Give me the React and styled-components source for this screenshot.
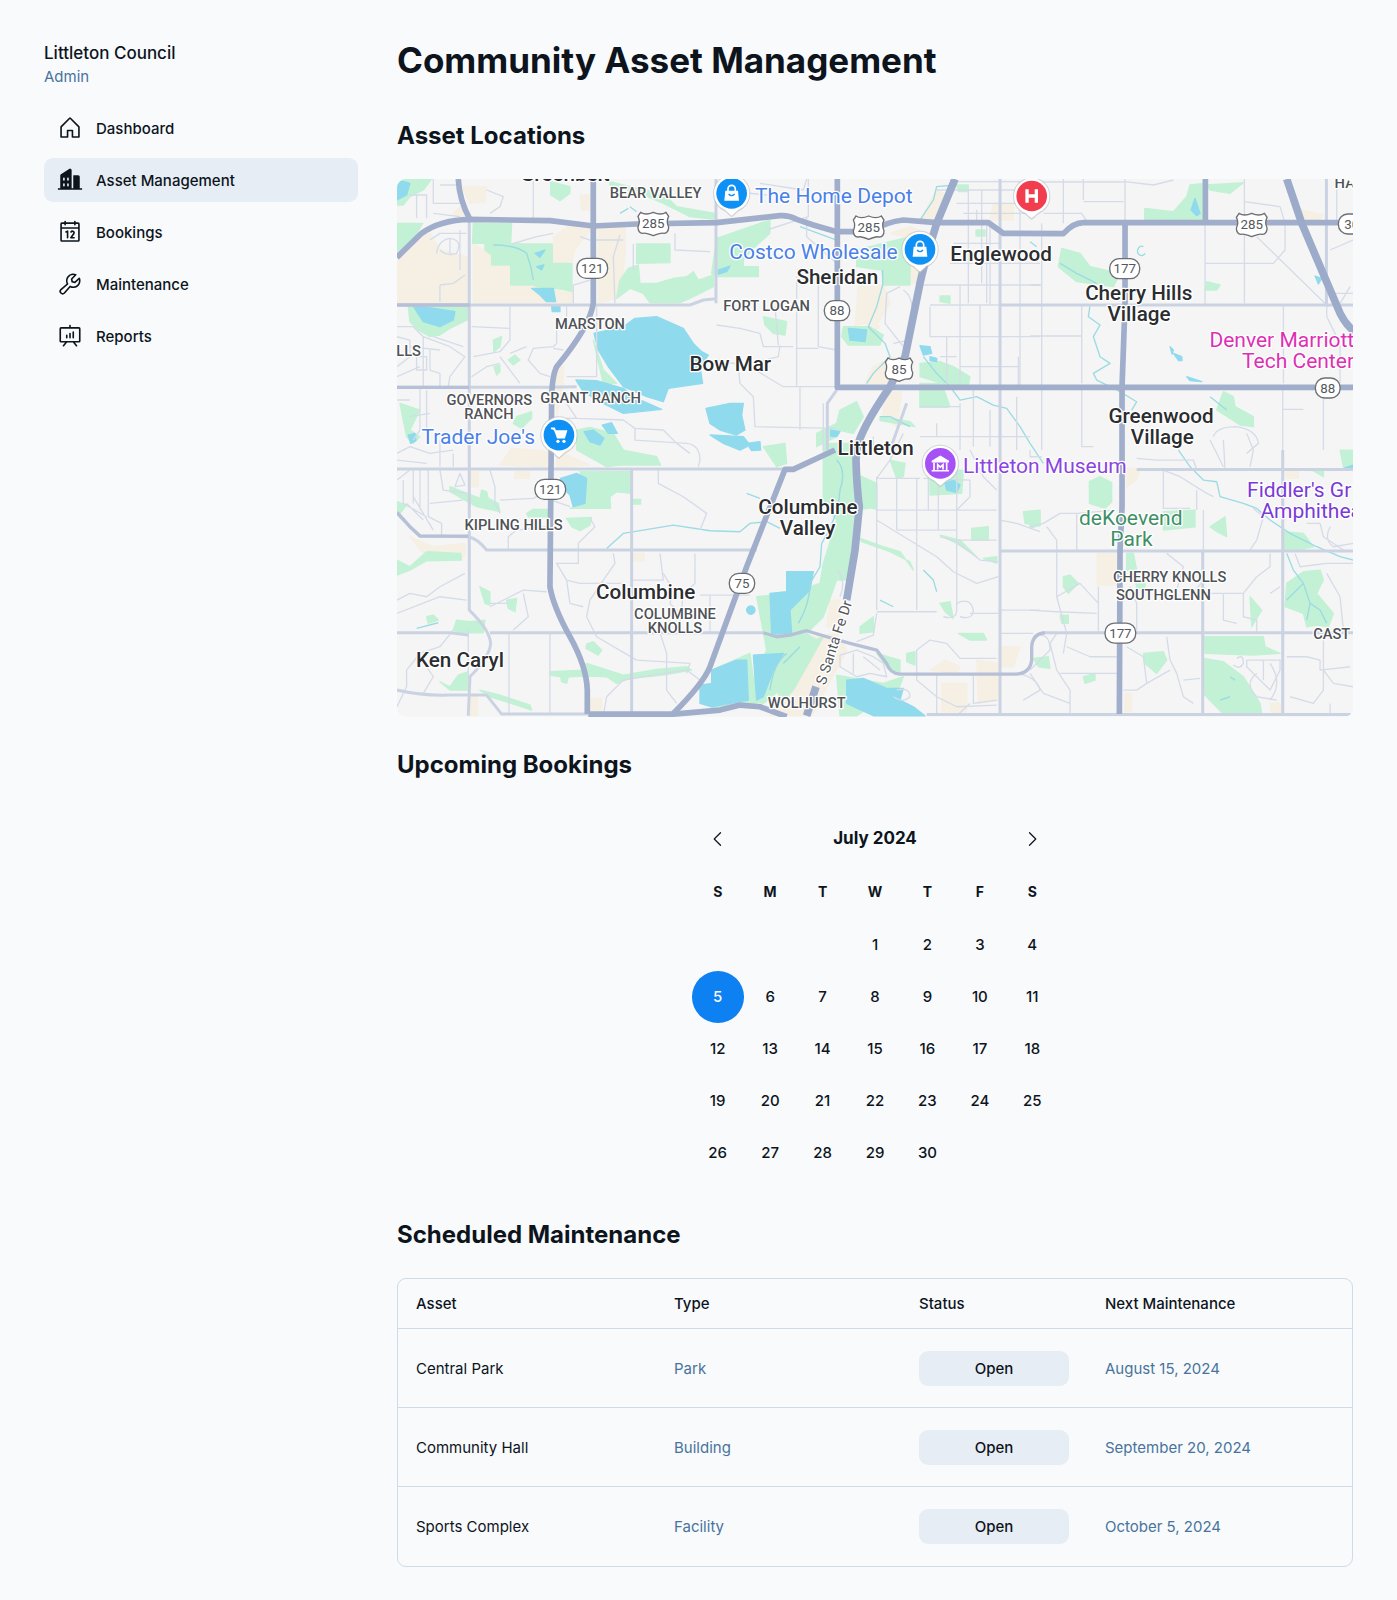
import React, { useState } from "react";
import styled, { createGlobalStyle } from "styled-components";
import {
	PiHouse,
	PiBuildingsFill,
	PiCalendar,
	PiWrench,
	PiPresentationChart,
	PiCaretLeft,
	PiCaretRight,
} from "react-icons/pi";

const navItems = [
	{ name: "Dashboard", icon: PiHouse },
	{ name: "Asset Management", icon: PiBuildingsFill },
	{ name: "Bookings", icon: PiCalendar },
	{ name: "Maintenance", icon: PiWrench },
	{ name: "Reports", icon: PiPresentationChart },
];

const weekdays = ["S", "M", "T", "W", "T", "F", "S"];
const days = Array.from({ length: 30 }, (_, i) => i + 1);

const assets = [
	{ name: "Central Park", type: "Park", next: "August 15, 2024" },
	{ name: "Community Hall", type: "Building", next: "September 20, 2024" },
	{ name: "Sports Complex", type: "Facility", next: "October 5, 2024" },
];

// ---- map data, in map units ----
const sand = [
	"M21 200L120 190L150 240L232 260V398H21Z",
	"M250 222L300 250L310 285L362 290L366 345L440 350L548 370V398H250Z",
	"M490 200L540 165H705V260L690 380L625 400V180H600L555 240L545 280H490Z",
	"M215 50H290L285 95L240 100Z",
	"M570 75H600V120H575Z",
	"M190 130L210 110L240 140L250 155L190 150Z",
	"M1480 345H1465L1400 460L1470 468L1440 500L1500 400Z",
	"M1405 350H1470L1440 450L1395 468Z",
	"M1450 590L1510 560L1530 600L1500 640H1425Z",
	"M1480 670L1535 665L1520 770L1480 740Z",
	"M1500 190L1560 170L1600 185L1540 200Z",
	"M1640 60L1680 80L1620 160L1590 150Z",
	"M1810 100H1870V150H1800Z",
	"M1560 290H1590L1580 340H1565Z",
	"M2735 120L2800 135L2790 150L2740 152Z",
	"M500 590H520V640L500 740Z",
	"M365 835L480 845V890L330 885Z",
	"M500 840L600 885L500 890Z",
	"M245 905H265V950H245Z",
	"M375 905H418V925H375Z",
	"M60 1100L130 1130L225 1120V1160L100 1150Z",
	"M728 1150H762V1172H728Z",
	"M602 1585H635V1622H602Z",
	"M240 1580H262V1637H240Z",
	"M1270 1400L1340 1390L1370 1440L1265 1637H1140L1200 1540Z",
	"M1320 1290H1350V1370H1310Z",
	"M1655 1540H1730V1625H1655Z",
	"M1760 1470L1830 1480V1590L1765 1600Z",
	"M1825 1430H1890L1870 1490H1825Z",
	"M1620 1500L1665 1470L1710 1490L1700 1510Z",
	"M2210 895H2250L2240 930L2210 950Z",
	"M2122 1150H2180V1245H2122Z",
	"M2205 1570L2225 1570V1625H2205Z",
	"M2640 1600H2675V1630H2645Z",
	"M2685 905H2725V925H2690Z",
];

const parks = [
	"M21 27H125L100 60L60 80L40 105H21Z",
	"M21 160H98L75 200L21 245Z",
	"M250 160H365L362 220L400 222H487V280H546V365L520 358L440 350L430 345H362V285H305V255L285 240V220H248Z",
	"M55 408H232V450L180 475L150 495L120 500L85 480L60 455Z",
	"M482 35L540 50V70L510 92L482 75Z",
	"M660 35L740 55L820 70L860 110L975 130V148L900 140L820 100L760 75L660 45Z",
	"M740 222H840V278L740 280Z",
	"M745 285L750 340L800 340L850 325L890 320L910 305L925 330L970 315V350L900 385L870 398L780 398L760 370L720 355L680 385L690 330L715 295Z",
	"M310 510L335 500L330 530L312 545Z",
	"M355 570L375 555L390 570L370 585ZM312 590L330 585V605L320 615Z",
	"M380 740L425 725V745L395 775L370 760Z",
	"M610 510L640 600L680 640L640 640Z",
	"M560 780L600 772L670 790L700 840L800 860L812 885H690L650 890L560 840Z",
	"M30 700L90 720L60 780L90 800L70 820L50 800Z",
	"M570 905H725V970L680 965L660 980L662 1015H540L560 1010L590 950Z",
	"M180 950L270 985L275 960L290 965L295 985L325 1000L330 1025L260 1010L180 965Z",
	"M410 1030L430 1018H475V1040H415Z",
	"M530 1045L605 1042L600 1065L570 1082L545 1070Z",
	"M728 988H752V1002H728Z",
	"M21 995L50 1005L30 1030H21Z",
	"M21 1170L60 1190L110 1145L212 1150L215 1170L110 1172L60 1200L21 1215Z",
	"M270 1250L300 1265L300 1305L285 1300Z",
	"M350 1290L380 1285L375 1325L355 1315Z",
	"M200 1350L240 1355L285 1350L280 1388H205L190 1380Z",
	"M110 1340L130 1335L145 1350L115 1360Z",
	"M590 1422L610 1415L635 1440L625 1455L588 1435Z",
	"M480 1505L580 1500L590 1480L700 1515L800 1498L890 1490L905 1500L820 1515L720 1525L680 1540L650 1520L600 1518L535 1520L530 1540L515 1535L512 1520L480 1515Z",
	"M150 1535L180 1550L205 1515L235 1505V1560L180 1560Z",
	"M270 1560L330 1575L420 1605L425 1620L380 1605L300 1580Z",
	"M980 205L1140 150L1140 190L1090 235L1060 270V290H1105V320H985L965 310Z",
	"M1400 240L1560 200L1560 345H1480L1475 300L1400 290Z",
	"M1360 470H1440L1480 495L1470 525H1375L1355 500Z",
	"M1120 440L1190 455L1185 495L1150 490L1125 465Z",
	"M1650 575L1690 590L1740 620L1735 645H1590V712H1675L1655 640L1590 620V580Z",
	"M1590 640H1655L1680 710L1590 712Z",
	"M1350 720L1400 695L1420 740L1390 790L1345 780L1340 800L1280 830V790L1340 760Z",
	"M1700 45H1735V65H1705ZM1758 180H1785V198H1758ZM1650 378H1680V400L1650 395Z",
	"M1470 740L1560 755L1575 770L1470 752Z",
	"M1300 820H1390L1395 910L1460 940V1010L1400 1020L1370 1230L1340 1230L1300 1340L1250 1390L1280 1410L1230 1480L1170 1560L1120 1600L1060 1590L1130 1440L1100 1280L1200 1270L1290 1240L1300 1180L1340 1050L1300 1000Z",
	"M1425 940H1460V1018L1425 1010Z",
	"M1120 830L1185 820L1190 880L1160 890Z",
	"M1160 1540L1225 1430L1300 1400L1210 1560L1170 1600Z",
	"M965 1500L1080 1450L1100 1600L965 1620Z",
	"M1500 870L1545 880L1540 920L1520 925Z",
	"M1620 930L1670 900H1720L1715 970L1620 975Z",
	"M1745 1075L1795 1070L1795 1110H1745Z",
	"M1900 1025L1950 1020V1068L1905 1060Z",
	"M1410 1105L1480 1130L1530 1145L1570 1200L1560 1175L1500 1145L1415 1115Z",
	"M1780 1165L1820 1160V1180Z",
	"M1650 1095L1710 1110L1760 1160L1700 1120Z",
	"M1650 1300L1680 1295L1690 1345L1665 1325Z",
	"M1705 1390L1780 1390L1790 1410L1740 1410Z",
	"M1410 1370L1450 1340V1385L1410 1390Z",
	"M1460 1450L1530 1470V1510L1490 1490ZM1550 1450L1575 1445V1485L1550 1475Z",
	"M1340 1515L1480 1540L1540 1520L1525 1560L1400 1637H1350Z",
	"M2264 115L2350 125L2390 80L2400 45L2445 40V152H2264Z",
	"M2450 45L2560 38L2520 70L2460 60Z",
	"M2015 235L2070 250L2100 290L2190 310L2170 350L2060 335L2005 290Z",
	"M2450 335L2490 345L2480 360H2445Z",
	"M2500 665L2530 680L2535 710L2590 740L2590 770L2550 765L2480 720Z",
	"M2098 935L2130 920L2165 938V995L2145 1015L2098 1000Z",
	"M2320 1025L2415 1020V1070L2320 1080Z",
	"M1920 1025H1950V1065L1920 1075Z",
	"M2850 840H2889V890H2860ZM2765 900H2800V920Z",
	"M2460 1070L2505 1040L2510 1100L2480 1085Z",
	"M2680 1085L2740 1090L2770 1130L2720 1140H2680Z",
	"M2210 1150H2230L2240 1200H2210ZM2235 1225H2265V1255H2240Z",
	"M2020 1220L2040 1215L2065 1240L2035 1270L2020 1250Z",
	"M2690 1240L2740 1205L2790 1200L2800 1230L2780 1270L2830 1330L2815 1370L2780 1365L2750 1370L2740 1330L2685 1310Z",
	"M2580 1280L2615 1320L2585 1370Z",
	"M2443 1400H2620L2625 1430L2670 1450L2590 1455L2445 1450Z",
	"M2440 1465L2500 1475L2560 1520L2610 1600L2615 1632H2500L2440 1570Z",
	"M2260 1450L2320 1445L2330 1470L2300 1510L2265 1480Z",
	"M1930 1465L1975 1460L1980 1495L1945 1490Z",
	"M2080 1520L2115 1510V1530L2085 1540Z",
	"M2010 1335H2035V1360H2015Z",
];

const water = [
	"M68 405L195 425L190 450L150 470L100 455Z",
	"M425 355H490L497 395L470 395L450 375Z",
	"M485 410H510V425H487Z",
	"M435 250L465 240L450 262ZM440 290L462 285L455 300Z",
	"M25 30L60 40L50 75L21 90Z",
	"M612 490L700 470L735 445L800 440L880 475L910 520L935 545L955 555L930 590L938 640L835 655L820 695L770 680L700 650L655 590L625 540Z",
	"M558 630L620 632L700 655L740 685L815 718L700 730L640 700L580 665Z",
	"M637 765L665 758L682 790L655 790ZM582 785L610 780L642 805L630 825L600 815Z",
	"M55 795L75 790L78 812L62 820Z",
	"M948 715L1020 700L1060 700L1055 735L1065 780L1040 795L990 780L960 760Z",
	"M960 795L1060 800L1080 825L1050 840L1000 820ZM1070 820L1110 815L1112 840L1085 842Z",
	"M512 925L560 910L590 925L585 1000L550 1010L540 975L515 950Z",
	"M1375 475L1430 480L1425 515L1380 510Z",
	"M1590 527L1620 530L1625 550L1600 555ZM1620 560L1640 565V575L1620 572Z",
	"M1322 780L1350 785L1340 800L1322 798Z",
	"M985 300L1020 288L1010 305L985 312Z",
	"M1190 1205H1270L1260 1260L1220 1300L1200 1320L1205 1390L1145 1392L1140 1270L1190 1265Z",
	"M1070 1320A12 12 0 1 0 1095 1320A12 12 0 1 0 1070 1320Z",
	"M965 1500L1040 1470L1070 1470L1075 1590L965 1610L930 1600V1545L965 1540Z",
	"M1090 1455L1180 1450L1150 1500L1120 1580L1100 1590Z",
	"M1370 1530L1420 1525L1490 1555L1540 1555L1530 1590L1570 1610L1605 1637H1450L1370 1600Z",
	"M1665 940L1690 930L1710 945L1700 968L1670 960Z",
	"M2403 120L2415 85L2430 130L2420 137Z",
	"M2775 318L2795 325L2785 342Z",
	"M2340 530L2350 540L2346 552ZM2350 550L2375 560L2376 572L2366 572Z",
	"M2390 620L2435 635L2400 632Z",
	"M2860 895H2889V885Z",
];

const streams = [
	"M310 225Q380 225 410 250Q425 290 430 330",
	"M690 130L715 115M720 110L740 125",
	"M1695 45L1640 50L1630 90L1590 150",
	"M1230 170L1340 210",
	"M1478 300V345L1460 410L1435 470L1485 520L1500 560L1450 610L1430 640",
	"M1600 560L1640 610L1680 650L1710 690L1760 680L1810 705L1850 715L1890 770L1920 820L1960 880",
	"M1920 215L1940 230",
	"M1560 770L1500 740L1470 740",
	"M2100 405L2095 440L2130 465L2110 500L2130 560L2160 580L2110 610L2120 630L2190 665L2240 695L2225 720",
	"M650 1135L700 1090L760 1080L850 1065L960 1082L1050 1085L1080 1060L1130 1055L1170 1075",
	"M1340 870Q1370 900 1350 960Q1345 1040 1295 1120L1290 1190L1260 1240Q1260 1300 1225 1360",
	"M1190 1450Q1150 1480 1140 1560M1230 1430L1180 1480",
	"M80 1375L145 1358",
	"M1600 1200L1630 1230L1640 1265M1470 1290L1510 1310",
	"M1070 970L1110 985",
	"M2010 280L2060 310L2120 340",
	"M2365 840L2400 890L2440 930L2480 935L2490 980L2560 1000L2600 1015L2640 1050L2700 1090L2780 1130L2850 1160L2889 1170",
	"M2690 1150L2710 1200L2740 1240L2760 1300L2790 1320L2810 1360M2740 1240L2690 1290M2760 1300L2750 1350",
	"M2460 680L2510 720M2520 1520L2535 1530M2490 1590L2520 1580",
	"M2260 230A12 14 0 1 0 2265 250",
];

const lanes = [
	"M60 75H110V145M80 75V145M130 27V100H210M130 130L210 140M150 45H200M290 60L340 80L330 110L300 130M430 27V148",
	"M150 345L190 340L225 315M150 345V395M120 210L150 190H230M140 250Q145 210 180 205Q220 210 200 250Q170 260 150 240M180 205V250M210 180V300",
	"M365 222L440 200L490 190M550 400V345L600 330M570 200L600 210H700M730 222V300M690 195L670 260L675 400M855 190V240L960 245",
	"M245 470L360 475V410M360 475V510L330 545L250 560M330 560L360 600L390 640M245 620L290 590L330 580M360 550L410 530",
	"M500 475V520L490 530L430 535L415 570L450 610L480 620M530 410V460M620 410V620L530 620M490 535L520 540",
	"M21 470H70L100 500L180 530L225 560L180 620L175 650M21 500L60 510V560L21 590M60 530L150 540M100 500V650M120 540V600L150 610V650M21 620L90 590M130 500L220 530M80 560L110 560V600L80 600Z",
	"M21 690H60M90 655V780L70 810M110 660V780M60 740L120 730M21 850L60 830L120 850L190 840M21 870L110 880M150 810V890M190 850V890",
	"M530 745H560L530 700V670M560 745L700 750L735 775L820 780L860 820L900 850M735 775V810L890 820Q930 825 930 870L925 890",
	"M300 900L315 950V1000L330 1030M330 990L430 985L480 960M355 1140V1100L380 1080L470 1070",
	"M21 930L60 900M40 930V1000L110 1040M70 900V1000M90 900V1020M115 900V1040L155 1060V1095M120 1000L220 990M150 900L160 960L230 970M210 910L195 950L225 945ZM50 1000L100 1050M70 980L130 1080",
	"M485 990L540 1010M600 1045L615 1070L565 1120V1180H500L530 1230L570 1240H700M530 1230L540 1300L580 1310M725 1230H820L810 1150M670 1150L675 1180L640 1230L600 1290L590 1340L620 1400L740 1470L900 1480L890 1510",
	"M820 1210L850 1260L840 1300L880 1340M915 1150V1240L880 1270L870 1360M805 900V940L880 980L950 1030L930 1080M930 1275H1080M960 1275V1388",
	"M21 1290L60 1270L110 1280L150 1250L225 1210M21 1330L150 1280L230 1290M300 1310L400 1260L470 1265M400 1270L415 1340L370 1380M300 1300L355 1300",
	"M190 1380L150 1430L90 1450L50 1500L50 1550L21 1610M110 1490L130 1520L100 1570M357 1388V1632M480 1388V1632M235 1380V1520M810 1388L830 1450V1560L860 1600M640 1637L650 1580L700 1530L820 1510L890 1500L930 1530",
	"M990 60L1130 75M1110 40L1240 60L1250 27M1255 27V140L1130 180M1250 140V200L1340 280M980 465L1050 475L1110 490L1120 530H1210M1155 410L1165 525M1220 320V650M1285 320V530L1340 540M1220 535H1285M1170 525L1165 560L1045 590L1050 640L1090 680L1095 770L1340 775",
	"M980 570L1080 590L1180 650H1340M1340 500H1345M1300 700V840M1230 650V780",
	"M1640 60H1890M1700 35H1920M1700 100H1920M1720 130H1920M1735 60V400M1775 60V340M1790 160V400M1800 170V405M1890 35V650M1690 220H1830M1680 280H1950M1600 345H1950M1620 405H1950M1620 410V500H1950M1670 500V650M1710 345V650M1770 405V650M1650 560H1700M1710 590H1890M1885 560V650M1760 120V160",
	"M1530 350L1490 370L1485 460L1540 530M1540 360Q1570 380 1565 430M1510 520L1560 510M1500 580V640",
	"M1710 700V840M1750 660V830M1800 720V830M1880 680V840M1590 710H1710M1590 800H1920M1640 760V800M1450 800V840",
	"M1920 36H2205M2020 27V160M2080 27V90M2205 27V160M2080 95H2200M1960 130H2075L2095 160M2205 35L2290 45L2350 30M2563 27V400M2563 95L2670 110L2685 160V240L2650 280H2445M2445 160V405M2600 200L2815 410M2820 240L2889 210M2840 150V27",
	"M1955 160V405M1955 345H1920M1920 498H2075M2075 405V640M1955 405V840M2075 660V830H2110M2680 405V640M2800 660V840M2678 650V840M2680 718H2740M2810 405V440L2850 520V640M2830 370H2889M2880 350L2850 400",
	"M2470 800Q2480 770 2540 770Q2600 780 2605 820L2570 850M2460 810L2500 890M2570 790L2590 840L2580 890",
	"M1460 925L1500 870L1540 790M1460 920V1320M1460 925H1590M1520 925V1080M1580 925V1320M1615 840V1020M1645 940V1080M1700 900V1320Q1700 1350 1660 1340M1460 1020H1820M1520 1080H1700M1460 1050L1640 1160L1690 1205L1760 1240L1825 1220M1700 1110H1820M1650 1100L1700 1115L1770 1170L1825 1175M1460 1325H1640M1600 925L1740 930V980L1700 1020M1740 840L1780 920L1820 960",
	"M1700 1300Q1740 1280 1750 1320Q1750 1350 1710 1340M1580 1510V1440L1620 1410L1670 1420L1710 1465H1820M1580 1450V1530L1640 1580L1700 1610L1820 1605M1750 1510V1600L1820 1590M1640 1510V1637M1825 1320H1950M1400 1415L1450 1395L1460 1330M1740 1330H1825M1830 1050L1880 1060L1950 1085M1830 1390H1930",
	"M1350 1455L1400 1440L1450 1460L1480 1480L1490 1520L1440 1510L1400 1520L1350 1490ZM1390 1450V1510M1420 1460L1470 1500M1520 1560Q1560 1550 1560 1580Q1540 1600 1510 1580M1340 1200Q1370 1230 1350 1280",
	"M1880 1510Q1940 1520 1950 1560L1900 1590M1700 1637L1740 1600M1920 840V860H1955",
	"M2240 865L2300 870H2410L2420 900M2320 900V1015H2400M2420 960V1020M2320 900L2370 920L2450 970L2470 980M2500 810L2505 900M2590 1015L2620 1040L2600 1110L2580 1140M2440 1020V1143M2060 1030L2180 1020M1920 1070L1960 1060L2010 1030L2060 1030V1140M1970 1070L2000 1110V1280L2030 1390L2020 1450",
	"M2330 1150L2380 1190L2360 1260M2410 1270L2440 1230M2500 1270H2560V1340L2600 1350V1390M2500 1270V1350L2540 1360M2440 1270H2500M2560 1270L2600 1220L2640 1190V1150M2640 1270L2670 1250M2715 1150L2730 1190L2810 1180H2889M2810 1210L2850 1280L2860 1380",
	"M1920 1320L2000 1325L2120 1330M2125 1250V1390M2000 1280L2070 1240L2125 1300M2220 1250L2240 1300V1390M2000 1390L1980 1420L2000 1500L2040 1560L2040 1637M2030 1430L2100 1460H2180M2010 1510H2180M1930 1400Q1980 1380 1980 1440L1920 1500M1920 1510L1960 1570L2040 1600M2210 1430L2260 1460L2270 1540L2240 1560H2200M2330 1400L2340 1470L2360 1510L2380 1580L2410 1600M2270 1540L2340 1500M2380 1530L2430 1525",
	"M2540 1465Q2560 1450 2560 1480Q2550 1500 2530 1485M2570 1470H2670V1500L2640 1560L2600 1520L2570 1490ZM2620 1470V1530M2600 1510Q2560 1540 2600 1580L2660 1590M2640 1480Q2680 1540 2640 1590",
	"M2690 1460H2750L2790 1470V1500L2880 1490M2800 1390V1560L2770 1600L2700 1580M2800 1500L2830 1540L2889 1550M2820 1600V1637M2750 1060H2790L2800 1100L2860 1140M2820 1070Q2800 1110 2830 1130L2889 1120",
];

const streets = [
	"M238 148V1320Q300 1380 302 1420Q300 1460 240 1520L235 1637",
	"M21 405H900L940 390L978 386M978 27V400",
	"M21 652H480L560 650",
	"M21 897H1185",
	"M21 1025L60 1070L90 1098L235 1100Q262 1105 290 1140H1100",
	"M21 1388H180L235 1395M300 1388H1120",
	"M21 1560Q100 1578 180 1575H290L335 1632H595",
	"M725 897V1637",
	"M1830 27V1637",
	"M1340 660L1312 700V840",
	"M1830 405H2889M2809 27V405",
	"M1830 1143H2889M1965 1388H2889M1610 1633H2889",
	"M2240 898H2889M2438 1143V1637M2678 840V1637",
	"M1550 700L1500 840",
];

const avenues = [
	"M1120 1388L1160 1400L1200 1395L1250 1382L1310 1400L1380 1420L1460 1440L1490 1480Q1500 1510 1530 1512H1880Q1920 1510 1925 1470V1430Q1928 1390 1965 1388",
	"M21 1028L60 1070L90 1098H235",
	"M21 652H238M240 405H21",
];

const highways = [
	"M205 27Q208 90 240 148",
	"M21 262L95 190Q150 150 240 148L480 152L610 168L740 162L980 158L1170 137Q1195 135 1220 148L1270 165L1340 185H1440Q1490 155 1540 150L1640 158H1795L1840 190L2020 191Q2050 158 2080 158H2889",
	"M610 27V400Q600 470 500 590Q485 620 485 700L480 1250Q490 1310 540 1400Q590 1490 592 1560V1632",
	"M1342 27V652H2889",
	"M1335 840L1210 898H1185L1125 1050L1070 1190L960 1490Q940 1540 850 1630",
	"M595 1632H850L990 1620L1050 1605L1110 1610L1190 1640",
	"M2205 165V400L2196 650V1010L2190 1140L2188 1632",
	"M2446 27V158",
];

const freeways = [
	"M1695 27L1640 160Q1600 290 1590 340L1545 560L1500 650Q1410 780 1400 840L1398 870Q1400 950 1408 1010L1395 1140L1370 1290M1278 1550L1250 1637",
	"M2690 27L2735 160L2850 430Q2870 470 2900 490",
];

const towns = [
	["Greenbelt", 525, 33],
	["Bow Mar", 1021, 602],
	["Sheridan", 1342, 341],
	["Englewood", 1833, 272],
	["Cherry Hills", 2246, 389],
	["Village", 2247, 452],
	["Greenwood", 2313, 759],
	["Village", 2317, 822],
	["Littleton", 1457, 855],
	["Columbine", 1254, 1032],
	["Valley", 1253, 1094],
	["Columbine", 767, 1288],
	["Ken Caryl", 210, 1492],
];

const districts = [
	["BEAR VALLEY", 797, 85],
	["MARSTON", 600, 477],
	["LLS", 56, 558],
	["GOVERNORS", 298, 706],
	["RANCH", 297, 748],
	["GRANT RANCH", 602, 699],
	["FORT LOGAN", 1130, 422],
	["HA", 2864, 54],
	["KIPLING HILLS", 371, 1080],
	["COLUMBINE", 855, 1346],
	["KNOLLS", 855, 1388],
	["WOLHURST", 1250, 1614],
	["CHERRY KNOLLS", 2339, 1237],
	["SOUTHGLENN", 2320, 1289],
	["CAST", 2825, 1407],
];

const places = [
	["The Home Depot", 1095, 99, "#4a80e8"],
	["Costco Wholesale", 1018, 266, "#4a80e8"],
	["Trader Joe's", 95, 823, "#4a80e8"],
	["Denver Marriott", 2458, 530, "#dd2fb4"],
	["Tech Center", 2556, 593, "#dd2fb4"],
	["Littleton Museum", 1719, 909, "#8a45e0"],
	["Fiddler's Gr", 2571, 980, "#7a3ad6"],
	["Amphithea", 2611, 1045, "#7a3ad6"],
	["deKoevend", 2067, 1064, "#3f8f66"],
	["Park", 2161, 1127, "#3f8f66"],
];

const shields = [
	["285", 790, 161, 92, true],
	["121", 607, 295, 92],
	["285", 1436, 172, 92, true],
	["88", 1341, 422, 76],
	["85", 1527, 598, 82, true],
	["177", 2204, 296, 90],
	["285", 2585, 164, 92, true],
	["30", 2885, 162, 80],
	["88", 2813, 654, 74],
	["121", 481, 958, 92],
	["75", 1056, 1240, 76],
	["177", 2191, 1389, 92],
];

const Roads = ({ list, color, width }) => (
	<g fill="none" stroke={color} strokeWidth={width} strokeLinejoin="round">
		{list.map((d) => (
			<path key={d} d={d} />
		))}
	</g>
);

const Areas = ({ list, color }) => (
	<g fill={color} stroke={color} strokeWidth="4" strokeLinejoin="round">
		{list.map((d) => (
			<path key={d} d={d} />
		))}
	</g>
);

const Shield = ({ label, x, y, width, us }) => (
	<g transform={`translate(${x} ${y})`}>
		{us ? (
			<path
				d={`M${-width / 2 + 8} -34Q${-width / 4} -24 0 -34Q${width / 4} -24 ${width / 2 - 8} -34L${width / 2} -22Q${width / 2 - 8} -6 ${width / 2} 10Q${width / 2} 28 ${width / 2 - 14} 29Q${width / 4} 26 0 36Q${-width / 4} 26 ${-width / 2 + 14} 29Q${-width / 2} 28 ${-width / 2} 10Q${-width / 2 + 8} -6 ${-width / 2} -22Z`}
				fill="#fff"
				stroke="#6c6f73"
				strokeWidth="4"
			/>
		) : (
			<rect
				x={-width / 2}
				y="-30"
				width={width}
				height="60"
				rx="28"
				fill="#fff"
				stroke="#6c6f73"
				strokeWidth="4"
			/>
		)}
		<ShieldText y="14">{label}</ShieldText>
	</g>
);

const Pin = ({ x, y, color, children }) => (
	<g transform={`translate(${x} ${y})`}>
		<path
			d="M0 72Q-8 66 -18 56Q-56 38 -56 0A56 56 0 0 1 56 0Q56 38 18 56Q8 66 0 72Z"
			fill="#b9bec6"
			opacity="0.6"
		/>
		<path
			d="M0 67Q-8 61 -18 51Q-53 36 -53 0A53 53 0 0 1 53 0Q53 36 18 51Q8 61 0 67Z"
			fill="#fff"
		/>
		<circle r="46" fill={color} />
		{children}
	</g>
);

const Bag = () => (
	<>
		<path d="M-19 -8H19L22 22H-22Z" fill="#fff" />
		<path d="M-11 -6V-13A11 11 0 0 1 11 -13V-6" fill="none" stroke="#fff" strokeWidth="5" />
		<path d="M-9 2Q0 12 9 2" fill="none" stroke="#0f90f5" strokeWidth="4" />
	</>
);

const AreaMap = () => (
	<MapFrame
		viewBox="21 27 2868 1613"
		preserveAspectRatio="xMidYMid slice"
		role="img"
		aria-label="Map of assets around Littleton"
	>
		<rect x="21" y="27" width="2868" height="1613" fill="#f5f5f5" />
		<Areas list={sand} color="#f6efe3" />
		<Areas list={parks} color="#c3f1d5" />
		<Areas list={water} color="#90daee" />
		<Roads list={streams} color="#9adbe4" width="4" />
		<Roads list={lanes} color="#d5dce8" width="4" />
		<Roads list={streets} color="#cbd3e2" width="9" />
		<Roads list={avenues} color="#b6c0d6" width="10" />
		<Roads list={highways} color="#a0adcb" width="17" />
		<Roads list={freeways} color="#9dabca" width="23" />

		{shields.map(([label, x, y, width, us]) => (
			<Shield key={`${x}-${y}`} label={label} x={x} y={y} width={width} us={us} />
		))}
		{towns.map(([name, x, y]) => (
			<TownText key={`${x}-${y}`} x={x} y={y}>
				{name}
			</TownText>
		))}
		{districts.map(([name, x, y]) => (
			<DistrictText key={name} x={x} y={y}>
				{name}
			</DistrictText>
		))}
		{places.map(([name, x, y, color]) => (
			<PlaceText key={name} x={x} y={y} fill={color}>
				{name}
			</PlaceText>
		))}
		<StreetText transform="translate(1346 1422) rotate(-72)">S Santa Fe Dr</StreetText>

		<Pin x={1025} y={70} color="#0f90f5">
			<Bag />
		</Pin>
		<Pin x={1590} y={238} color="#0f90f5">
			<Bag />
		</Pin>
		<Pin x={1925} y={78} color="#f23d4f">
			<path d="M-14 -20V20M14 -20V20M-14 0H14" stroke="#fff" strokeWidth="10" />
		</Pin>
		<Pin x={507} y={795} color="#0f90f5">
			<path d="M-24 -20H-14L-4 8H16L22 -12H-12" fill="#fff" stroke="#fff" strokeWidth="5" />
			<circle cx="-3" cy="19" r="5" fill="#fff" />
			<circle cx="15" cy="19" r="5" fill="#fff" />
		</Pin>
		<Pin x={1651} y={880} color="#a551f5">
			<path d="M-26 -8L0 -24L26 -8V-3H-26Z" fill="#fff" />
			<path d="M-19 -3V20M19 -3V20M-26 22H26M-8 18V4L0 11L8 4V18" fill="none" stroke="#fff" strokeWidth="5" />
		</Pin>
	</MapFrame>
);

const Sidebar = ({ active, onSelect }) => (
	<SidebarStyles>
		<Owner>
			<h2>Littleton Council</h2>
			<p>Admin</p>
		</Owner>
		<nav>
			<NavList>
				{navItems.map(({ name, icon: Icon }) => (
					<li key={name}>
						<NavLink
							href={`#${name.toLowerCase().replace(" ", "-")}`}
							$active={name === active}
							onClick={() => onSelect(name)}
						>
							<Icon size={26} />
							<span>{name}</span>
						</NavLink>
					</li>
				))}
			</NavList>
		</nav>
	</SidebarStyles>
);

const Calendar = () => {
	const [selected, setSelected] = useState(5);
	return (
		<CalendarStyles>
			<MonthBar>
				<MonthButton aria-label="Previous month">
					<PiCaretLeft size={20} />
				</MonthButton>
				<h3>July 2024</h3>
				<MonthButton aria-label="Next month">
					<PiCaretRight size={20} />
				</MonthButton>
			</MonthBar>
			<DayGrid>
				{weekdays.map((day, i) => (
					<Weekday key={i}>{day}</Weekday>
				))}
				{days.map((day) => (
					<Day
						key={day}
						$first={day === 1}
						$selected={day === selected}
						onClick={() => setSelected(day)}
					>
						{day}
					</Day>
				))}
			</DayGrid>
		</CalendarStyles>
	);
};

const MaintenanceTable = () => (
	<TableFrame>
		<Table>
			<colgroup>
				<Column $width="258px" />
				<Column $width="245px" />
				<Column $width="186px" />
				<Column />
			</colgroup>
			<thead>
				<tr>
					<th>Asset</th>
					<th>Type</th>
					<th>Status</th>
					<th>Next Maintenance</th>
				</tr>
			</thead>
			<tbody>
				{assets.map(({ name, type, next }) => (
					<tr key={name}>
						<Cell>{name}</Cell>
						<Cell $muted>{type}</Cell>
						<Cell>
							<StatusButton>Open</StatusButton>
						</Cell>
						<Cell $muted>{next}</Cell>
					</tr>
				))}
			</tbody>
		</Table>
	</TableFrame>
);

function App() {
	const [active, setActive] = useState("Asset Management");
	return (
		<>
			<GlobalStyle />
			<Page>
				<Sidebar active={active} onSelect={setActive} />
				<Main>
					<PageTitle>Community Asset Management</PageTitle>
					<Sections>
						<section>
							<SectionTitle>Asset Locations</SectionTitle>
							<AreaMap />
						</section>
						<section>
							<SectionTitle>Upcoming Bookings</SectionTitle>
							<Calendar />
						</section>
						<section>
							<SectionTitle>Scheduled Maintenance</SectionTitle>
							<MaintenanceTable />
						</section>
					</Sections>
				</Main>
			</Page>
		</>
	);
}

const GlobalStyle = createGlobalStyle`
	* {
		margin: 0;
		padding: 0;
		box-sizing: border-box;
	}
	body {
		background: #f8fafc;
		color: #0d141c;
		font-family: Inter, "Noto Sans", sans-serif;
		font-size: 15px;
		line-height: 23px;
	}
	button {
		font: inherit;
		color: inherit;
		border: none;
		background: none;
		cursor: pointer;
	}
`;

const Page = styled.div`
	display: flex;
	gap: 3px;
	min-height: 100vh;
	padding: 38px 26px 34px;
`;

const SidebarStyles = styled.aside`
	width: 350px;
	flex-shrink: 0;
	padding: 3px 18px;
`;

const Owner = styled.div`
	margin-bottom: 17px;
	h2 {
		font-size: 17px;
		font-weight: 500;
		line-height: 24px;
	}
	p {
		color: #49739c;
		line-height: 24px;
	}
`;

const NavList = styled.ul`
	list-style: none;
	display: flex;
	flex-direction: column;
	gap: 8px;
`;

const NavLink = styled.a`
	display: flex;
	align-items: center;
	gap: 13px;
	height: 44px;
	padding: 0 13px;
	border-radius: 9px;
	color: inherit;
	font-weight: 500;
	text-decoration: none;
	background: ${({ $active }) => ($active ? "#e7edf4" : "transparent")};
`;

const Main = styled.main`
	flex: 1;
	min-width: 0;
	padding: 0 18px;
`;

const PageTitle = styled.h1`
	font-size: 35px;
	font-weight: 700;
	line-height: 44px;
	margin-bottom: 17px;
`;

const Sections = styled.div`
	display: flex;
	flex-direction: column;
	gap: 11px;
`;

const SectionTitle = styled.h2`
	font-size: 24px;
	font-weight: 700;
	line-height: 30px;
	padding: 22px 0 28px;
`;

const MapFrame = styled.svg`
	display: block;
	width: 100%;
	aspect-ratio: 16 / 9;
	border-radius: 9px;
	font-family: Roboto, sans-serif;
`;

const MapText = styled.text`
	paint-order: stroke;
	stroke: #fff;
	stroke-width: 8px;
	stroke-linejoin: round;
`;

const TownText = styled(MapText)`
	font-size: 62px;
	font-weight: 500;
	fill: #2b2d30;
	text-anchor: middle;
`;

const DistrictText = styled(MapText)`
	font-size: 44px;
	font-weight: 500;
	fill: #505357;
	text-anchor: middle;
`;

const PlaceText = styled(MapText)`
	font-size: 63px;
`;

const StreetText = styled(MapText)`
	font-size: 44px;
	fill: #55585c;
	text-anchor: middle;
`;

const ShieldText = styled.text`
	font-size: 40px;
	fill: #55585c;
	text-anchor: middle;
`;

const CalendarStyles = styled.div`
	width: 367px;
	max-width: 100%;
	margin: 0 auto;
	padding: 9px 0 8px;
`;

const MonthBar = styled.div`
	display: flex;
	align-items: center;
	justify-content: space-between;
	height: 44px;
	margin-bottom: 3px;
	h3 {
		font-size: 17px;
		font-weight: 700;
	}
`;

const MonthButton = styled.button`
	display: flex;
	align-items: center;
	justify-content: center;
	width: 52px;
	height: 44px;
`;

const DayGrid = styled.div`
	display: grid;
	grid-template-columns: repeat(7, 1fr);
	grid-template-rows: 55px;
	grid-auto-rows: 52px;
`;

const Weekday = styled.span`
	display: flex;
	align-items: center;
	justify-content: center;
	font-size: 14px;
	font-weight: 700;
`;

const Day = styled.button`
	display: flex;
	align-items: center;
	justify-content: center;
	border-radius: 50%;
	font-weight: 500;
	${({ $first }) => $first && "grid-column-start: 4;"}
	${({ $selected }) =>
		$selected &&
		`
		background: #0d80f2;
		color: #f8fafc;
	`}
`;

const TableFrame = styled.div`
	border: 1px solid #cedbe8;
	border-radius: 9px;
	overflow: hidden;
`;

const Table = styled.table`
	width: 100%;
	table-layout: fixed;
	border-collapse: collapse;
	th {
		height: 50px;
		padding: 0 18px;
		font-weight: 500;
		text-align: left;
	}
	tbody tr {
		border-top: 1px solid #cedbe8;
	}
`;

const Column = styled.col`
	width: ${({ $width }) => $width || "auto"};
`;

const Cell = styled.td`
	height: 79px;
	padding: 0 18px;
	font-weight: 400;
	color: ${({ $muted }) => ($muted ? "#49739c" : "inherit")};
`;

const StatusButton = styled.button`
	display: block;
	width: 100%;
	height: 35px;
	border-radius: 9px;
	background: #e7edf4;
	font-weight: 500;
`;

export default App;
